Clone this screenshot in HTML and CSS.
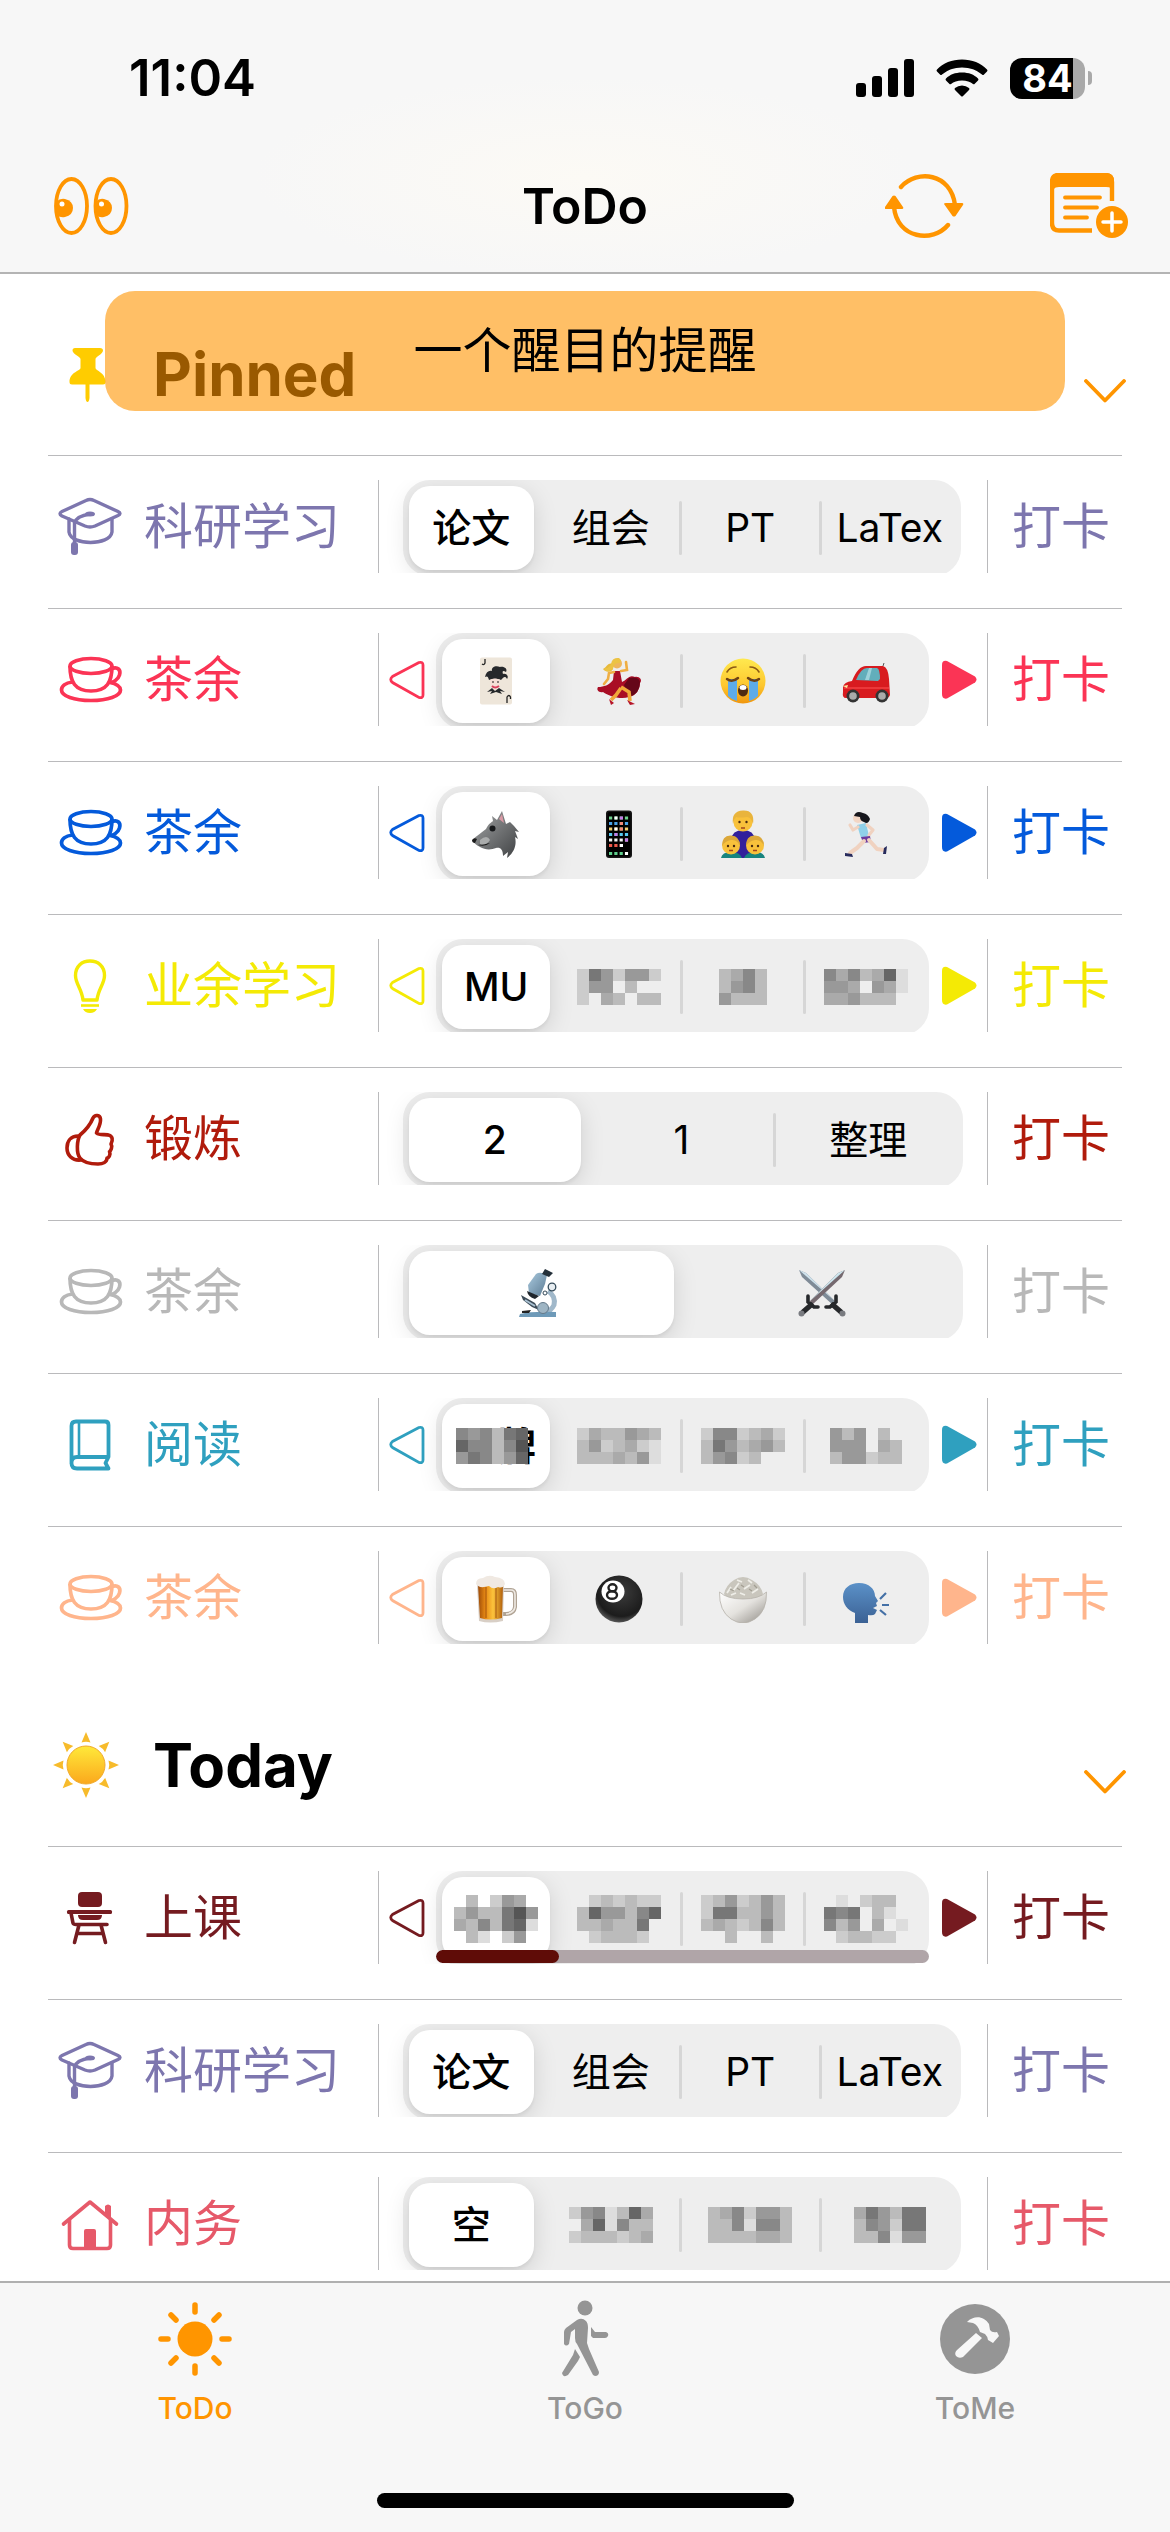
FILE: index.html
```html
<!DOCTYPE html>
<html lang="zh-CN">
<head>
<meta charset="utf-8">
<meta name="viewport" content="width=device-width, initial-scale=1">
<title>ToDo</title>
<link rel="stylesheet" href="styles.css">
</head>
<body>
<svg class="sprite" aria-hidden="true">
  <defs>
    <linearGradient id="g-face" x1="0" y1="0" x2="0" y2="1"><stop offset="0" stop-color="#ffe94f"/><stop offset=".6" stop-color="#fdc72f"/><stop offset="1" stop-color="#f0960e"/></linearGradient>
    <linearGradient id="g-sun" x1="0" y1="0" x2="0" y2="1"><stop offset="0" stop-color="#ffe93a"/><stop offset="1" stop-color="#fba81c"/></linearGradient>
    <linearGradient id="g-wolf" x1="0" y1="0" x2="1" y2="1"><stop offset="0" stop-color="#a3a5a6"/><stop offset="1" stop-color="#3e4042"/></linearGradient>
    <linearGradient id="g-beer" x1="0" y1="0" x2="1" y2="0"><stop offset="0" stop-color="#9c4a08"/><stop offset=".3" stop-color="#e88a14"/><stop offset=".6" stop-color="#fcc33c"/><stop offset="1" stop-color="#b05f0c"/></linearGradient>
    <linearGradient id="g-head" x1="0" y1="0" x2="0" y2="1"><stop offset="0" stop-color="#5b91c8"/><stop offset="1" stop-color="#3b6194"/></linearGradient>
    <linearGradient id="g-scope" x1="0" y1="0" x2="1" y2="1"><stop offset="0" stop-color="#a9c9de"/><stop offset="1" stop-color="#5c7b93"/></linearGradient>
    <linearGradient id="g-bowl" x1="0" y1="0" x2="1" y2="1"><stop offset="0" stop-color="#ffffff"/><stop offset=".5" stop-color="#e4e2de"/><stop offset="1" stop-color="#8f8b85"/></linearGradient>
    <radialGradient id="g-ball" cx=".55" cy=".35" r=".65"><stop offset="0" stop-color="#3c3c3c"/><stop offset=".8" stop-color="#1c1c1c"/><stop offset="1" stop-color="#555"/></radialGradient>
  </defs>

  <symbol id="i-cap" viewBox="0 0 66 66"><g fill="none" stroke="currentColor" stroke-width="3.400" stroke-linejoin="round" stroke-linecap="round"><path d="M29 8.500Q33 6.500 37 8.500L61 19.500Q65 21.500 61 23.500L38 34Q33 36 28 34L5 24Q1 21.500 5 19.500Z"/><path d="M12 27V40C14 54 53 54 55 40V27"/><path d="M33 22C26 23 19 26 17.500 31V51"/></g><ellipse cx="33" cy="22" rx="5" ry="2.500" fill="currentColor"/><rect x="14" y="50" width="7" height="13" rx="3" fill="currentColor"/></symbol>
  <symbol id="i-cup" viewBox="0 0 66 66"><g fill="none" stroke="currentColor" stroke-width="3.700"><ellipse cx="34" cy="21" rx="21" ry="7.500"/><path d="M13 21C13 37 18 46 34 46S55 37 55 21"/><path d="M54 24C61 21 64 25 62.500 30S56 38 51.500 37"/><path d="M15.500 37C8 38 4.500 41.500 4.500 45C4.500 51 17 55.500 34 55.500S63.500 51 63.500 45C63.500 41.500 60 39 53 37.500"/></g></symbol>
  <symbol id="i-bulb" viewBox="0 0 66 66"><g fill="none" stroke="currentColor" stroke-width="3.400"><path d="M26 49C25 38 18.500 33 18.500 24.500C18.500 15 25 10 33 10S47.500 15 47.500 24.500C47.500 33 41 38 40 49Z" stroke-linejoin="round"/><path d="M24 54.500H42" stroke-width="2.600"/></g><path d="M26 58H40Q38 62 33 62T26 58Z" fill="currentColor"/></symbol>
  <symbol id="i-thumb" viewBox="0 0 66 66"><g fill="none" stroke="currentColor" stroke-width="3.600" stroke-linejoin="round" stroke-linecap="round"><path d="M23 31C29 26 34 19 36 14C38 10 43 11 43.500 15C44 21 40 26 39.500 29C43 32 49 29.500 53 31.500C57 34 54.500 39 54 40C56 43 53.500 47 52.500 47.500C54 51 51.500 54 50 54C50 58 46 60 41 60C33 60 26 58 23 54C19 49 20 36 23 31Z"/><path d="M21 32C14 32 10 37 10 44S15 57 24 56"/></g></symbol>
  <symbol id="i-book" viewBox="0 0 66 66"><g fill="none" stroke="currentColor" stroke-width="3.800" stroke-linejoin="round"><path d="M14.500 54V16Q14.500 11.500 19 11.500H48Q51.500 11.500 51.500 15V47H20Q14.500 47 14.500 53Q14.500 58.500 20 58.500H51.500L48.500 53L51.500 47"/><path d="M22 12V47" stroke-width="2.600"/></g></symbol>
  <symbol id="i-chair" viewBox="0 0 66 66"><g fill="currentColor"><rect x="21" y="9" width="24" height="15" rx="4"/><rect x="10" y="27" width="45" height="4" rx="1.500"/><path d="M21 32H45Q45 37 40 37H26Q21 37 21 32Z"/></g><path d="M14 30L16 40Q16.500 41.500 19 41.500H50M22 42L17.500 59.500M44 42L48.500 59.500M21 50.500H46" fill="none" stroke="currentColor" stroke-width="3.600" stroke-linecap="round"/></symbol>
  <symbol id="i-house" viewBox="0 0 66 66"><g fill="none" stroke="currentColor" stroke-width="3.600" stroke-linejoin="round" stroke-linecap="round"><path d="M6.500 35L33 13L59.500 35"/><path d="M12.500 31V56Q12.500 59.500 16 59.500H50Q53.500 59.500 53.500 56V31"/></g><path d="M48 17Q51 14 54 17V30L48 25ZM27 59V42Q27 40 29 40H37Q39 40 39 42V59Z" fill="currentColor"/></symbol>
  <symbol id="i-prev" viewBox="0 0 36 40"><path d="M30 2.500L3.500 16.500Q0 19.500 3.500 22.500L30 37.500Q34 38.500 34 35V5Q34 1.500 30 2.500Z" fill="none" stroke="currentColor" stroke-width="2.800"/></symbol>
  <symbol id="i-next" viewBox="0 0 36 40"><path d="M6 1L34 16.500Q37 19.500 34 22.500L6 38.500Q1 39.500 1 34V5Q1 0 6 1Z" fill="currentColor"/></symbol>
  <symbol id="i-down" viewBox="0 0 42 24"><path d="M2 2L21 21.500L40 2" fill="none" stroke="currentColor" stroke-width="3.800" stroke-linecap="round" stroke-linejoin="round"/></symbol>

  <symbol id="e-joker" viewBox="0 0 48 48"><rect x="8" y="0.500" width="32" height="47" rx="2" fill="#eee6da"/><path d="M13 2V6Q12 8.500 10 7" fill="none" stroke="#222" stroke-width="1.300"/><path d="M35 46V40Q37 37 38.500 40V42" fill="none" stroke="#222" stroke-width="1.300"/><path d="M13 20C14 15 17 13 20 14C19 10 24 8 28 10C32 9 36 12 34 15C31 13 30 14 31 17C35 16 37 20 35 22C33 18 31 21 29 23C24 21 20 22 17 23C16 19 15 19 13 20Z" fill="#26282b"/><path d="M18 23Q23 20 28 23L27 30L23 33L19 30Z" fill="#f6dfd6"/><path d="M20 29Q23 32 27 29" stroke="#d8415d" stroke-width="2" fill="none"/><circle cx="21" cy="25" r=".8"/><circle cx="26" cy="25" r=".8"/><path d="M15 35L20 31L23 34L27 31L33 35L28 34L30 37L24 35L18 37L20 34Z" fill="#26282b"/></symbol>
  <symbol id="e-dance" viewBox="0 0 48 48"><path d="M19 14L25 14L27 25C32 23 34 17 40 20C44 19 48 23 45 26C45 32 41 39 34 40C25 43 14 39 8 35C4 36 1 33 3 30C9 30 14 28 18 23Z" fill="#a90d25"/><path d="M34 21Q44 19 45 25Q45 37 34 40L29 28Z" fill="#650719"/><path d="M18 7C13 5 12 10 8 12C11 16 17 15 18 12Z" fill="#e7b93a"/><circle cx="22" cy="6.500" r="5" fill="#eeb65c"/><path d="M16 7Q17 0 24 1Q28 4 24 6Q19 5 18 12Q10 17 9 11Q14 12 16 7Z" fill="#ecc344"/><path d="M26 14L32 13L31 5M19 15L14 16L13 22L9 27" stroke="#efae43" stroke-width="2.600" fill="none" stroke-linecap="round"/><path d="M26 30L34 35L35 44M26 31L21 38L16 43" stroke="#f0a83a" stroke-width="3.600" fill="none"/><path d="M14 42L19 46L16 48ZM32 43L40 47L35 48Z" fill="#b51428"/></symbol>
  <symbol id="e-cry" viewBox="0 0 48 48"><circle cx="24" cy="24" r="22.500" fill="url(#g-face)"/><path d="M9 22H18V44Q13 43 9 39ZM30 22H39V39Q35 43 30 44Z" fill="#5eabe9"/><path d="M8 22Q13 26 19 21M29 21Q35 26 40 22" fill="none" stroke="#6d4216" stroke-width="2.500" stroke-linecap="round"/><path d="M8 15Q11 10 17 10M40 15Q37 10 31 10" fill="none" stroke="#8d5a14" stroke-width="1.600" stroke-linecap="round"/><ellipse cx="24" cy="33.500" rx="5" ry="6" fill="#4f2b12"/><ellipse cx="24" cy="30.500" rx="3.500" ry="2.500" fill="#fff"/></symbol>
  <symbol id="e-car" viewBox="0 0 48 48"><path d="M1 30Q2 25 10 24Q16 9 24 9L41 9Q46 10 47 22L48 38Q47 41 44 41H4Q0 41 1 35Z" fill="#d81b1f"/><path d="M14 23Q19 11 25 11H35Q38 12 38 22L36 24Z" fill="#62aebb"/><path d="M27 11H30L27 23H23Z" fill="#9dd2da"/><path d="M2 31H47" stroke="#f55" stroke-width="1"/><path d="M41 9L42 6" stroke="#555"/><circle cx="11" cy="39" r="6.500" fill="#333"/><circle cx="11" cy="39" r="3.800" fill="#aaa"/><circle cx="40" cy="39" r="6.500" fill="#333"/><circle cx="40" cy="39" r="3.800" fill="#aaa"/><path d="M1 29L6 28L5 31Z" fill="#ffe9a0"/></symbol>
  <symbol id="e-wolf" viewBox="0 0 48 48"><path d="M1 30C1 28 8 24 14 19C17 13 20 12 21 11L20 6L25 10L30 1L34 14L38 12L42 16L47 22L43 21L46 29L43 27C45 35 42 43 35 48L36 42L31 46C31 39 28 37 24 38C19 40 13 40 8 37C5 35 2 34 1 30Z" fill="url(#g-wolf)"/><path d="M27 9L30 4L32 13Z" fill="#d99aa5"/><circle cx="20.500" cy="18.500" r="3" fill="#17191b"/><path d="M0 30Q2 27 5 29L3 33Q0 33 0 30ZM6 35Q13 37 18 33" fill="#1a1a1a"/><path d="M8 30Q15 24 18 30Q14 36 8 34Z" fill="#aaacac"/></symbol>
  <symbol id="e-phone" viewBox="0 0 48 48"><rect x="11" y="0.500" width="26" height="47.500" rx="3" fill="#161616"/><rect x="12.500" y="2" width="23" height="44.500" rx="2" fill="#000"/><g stroke-width="3.200" stroke-dasharray="3.200 2.100"><path d="M14 8H34" stroke="#6fd38f"/><path d="M14 13.500H34" stroke="#4aa3e8"/><path d="M14 19H34" stroke="#f2cf72"/><path d="M14 24.500H34" stroke="#57c8f0"/><path d="M14 30H34" stroke="#f3f3f3"/><path d="M14 35.500H29" stroke="#ef5a4c"/><path d="M14 43.500H34" stroke="#5fd08d"/></g><path d="M19.500 8H22.500M19.500 19H22.500M30 43.500H33M24.800 35.500H28" stroke="#fff" stroke-width="3.200"/><path d="M24.800 8H28M19.500 24.500H22.500M30 30H33" stroke="#c77be8" stroke-width="3.200"/><path d="M24.800 19H28M24.800 13.500H28" stroke="#f08a7a" stroke-width="3.200"/></symbol>
  <symbol id="e-family" viewBox="0 0 48 48"><path d="M12 30Q13 20 24 20T36 30L33 48H15Z" fill="#32209b"/><circle cx="24" cy="12" r="9.500" fill="#f8c13b"/><path d="M14 14Q12 1 24 0.500T34 14Q32 7 28 7Q20 8 17 7Q15 9 14 14Z" fill="#e9b43c"/><path d="M2 48Q3 42 12 42T23 48ZM25 48Q27 42 36 42T46 48Z" fill="#17847f"/><circle cx="12" cy="35.500" r="9" fill="#f8c13b"/><circle cx="36" cy="35.500" r="9" fill="#f8c13b"/><path d="M3 36Q3 25 12 25.500T21 36Q18 29 12 30T3 36ZM27 36Q27 25 36 25.500T45 36Q42 29 36 30T27 36Z" fill="#dca839"/><g fill="#4a2b10"><circle cx="20.500" cy="12" r="1.200"/><circle cx="27.500" cy="12" r="1.200"/><circle cx="9" cy="36" r="1.200"/><circle cx="15" cy="36" r="1.200"/><circle cx="33" cy="36" r="1.200"/><circle cx="39" cy="36" r="1.200"/></g><path d="M22 18H26M10 40.500H14M34 40.500H38" stroke="#a1461d" stroke-width="1.500"/></symbol>
  <symbol id="e-run" viewBox="0 0 48 48"><circle cx="16" cy="8" r="5" fill="#f3d6c4"/><path d="M12 6Q14 0 21 3Q26 4 28 9Q26 15 22 12Q18 11 18 7Z" fill="#16171d"/><path d="M15 15L24 13L27 26L19 28Z" fill="#8fd0e9"/><path d="M16 17L11 20L8 15M25 15L31 20L27 25" fill="none" stroke="#f0d2c0" stroke-width="3.200" stroke-linecap="round" stroke-linejoin="round"/><path d="M19 27L28 26L29 32L21 33Z" fill="#6d3b9f"/><path d="M22 31L15 38L8 43M27 30L35 39L42 40" fill="none" stroke="#f0d2c0" stroke-width="4" stroke-linecap="round" stroke-linejoin="round"/><path d="M3 43L10 44L11 47L3 46ZM42 38L45 36L44 44L41 44Z" fill="#272b5c"/></symbol>
  <symbol id="e-scope" viewBox="0 0 48 48"><path d="M30 22Q38 27 36 36Q33 42 28 43" fill="none" stroke="#a0b8ca" stroke-width="5"/><path d="M18 5Q22 2 29 6L27 15L22 27L11 24L10 16Z" fill="url(#g-scope)"/><path d="M24 5L27 0L35 4L31 8Z" fill="#24303a"/><path d="M9 22L21 27L17 30Q10 28 9 22Z" fill="#20262c"/><circle cx="34" cy="18" r="3.800" fill="#e8eef2" stroke="#344a59" stroke-width="1.300"/><circle cx="27" cy="24" r="2" fill="#fff" stroke="#344a59"/><path d="M3 26L17 34L21 41L14 38L5 31Z" fill="#3c4b57"/><path d="M7 31L17 37" stroke="#a9c1d2" stroke-width="2"/><path d="M2 45Q14 42 38 43V48H1Z" fill="#6e9ab8"/><circle cx="25" cy="39" r="5.500" fill="#9eb5c4" stroke="#63798a"/><path d="M4 42L13 41L11 44H4Z" fill="#222"/></symbol>
  <symbol id="e-swords" viewBox="0 0 48 48"><path d="M1 1L8 4L38 33L35 36L4 8Z" fill="#7f8b97"/><path d="M1 1L8 4L38 33Z" fill="#cfe2ec"/><path d="M47 1L40 4L11 33L14 36L44 8Z" fill="#75696f"/><path d="M47 1L40 4L11 33Z" fill="#cde6ee"/><g stroke="#26282b" fill="none" stroke-linecap="round"><path d="M10 27L10 33L16 38L20 38M38 27V33L32 38L28 38" stroke-width="3.600"/><path d="M13 36L5 43M35 36L43 43" stroke-width="5"/></g><circle cx="3.500" cy="44.500" r="3" fill="#797b80"/><circle cx="44.500" cy="44.500" r="3" fill="#797b80"/></symbol>
  <symbol id="e-beer" viewBox="0 0 48 48"><path d="M29 15H39Q43 15 43 20V32Q42 39 34 39H30" fill="none" stroke="#b0a394" stroke-width="4"/><path d="M30 15H39Q43 15 43 20V32Q42 38 34 39" fill="none" stroke="#eee9e3" stroke-width="1.600"/><path d="M5 9H32L31 46Q18 49 7 46Z" fill="#d8cfc6"/><path d="M6 10H31L30 43Q18 46 8 43Z" fill="url(#g-beer)"/><path d="M14 12V43M24 12V43" stroke="#9b4c0a" stroke-opacity=".45" stroke-width="2"/><path d="M4 9Q4 3 11 3Q17 -1 23 2Q33 3 33 9Q31 14 26 12Q21 15 17 11Q7 14 4 9Z" fill="#f0e9e2"/></symbol>
  <symbol id="e-ball" viewBox="0 0 48 48"><circle cx="24" cy="24" r="23.500" fill="url(#g-ball)"/><ellipse cx="18" cy="16.500" rx="11.500" ry="11" fill="#fff"/><g fill="none" stroke="#222" stroke-width="2.400"><ellipse cx="17.500" cy="12.800" rx="4" ry="3.500"/><ellipse cx="17" cy="20" rx="5" ry="3.800"/></g></symbol>
  <symbol id="e-rice" viewBox="0 0 48 48"><path d="M5 19Q7 10 15 5Q24 -1 33 5Q42 10 44 19L40 24H9Z" fill="#c9c6bd"/><path d="M8 18L12 12M14 16L20 8M18 5L23 7M25 14L31 10M33 18L39 14M29 5L33 8M21 18L26 20M12 20L17 18" stroke="#efeee8" stroke-width="1.800"/><path d="M11 14L15 16M22 10L25 12M30 14L33 16M35 10L38 13M18 13L21 15" stroke="#a29e92" stroke-width="1.200"/><path d="M0.500 17Q8 24 24 24T47.500 17Q48 36 36 44Q30 48 24 48T12 44Q0 36 0.500 17Z" fill="url(#g-bowl)" stroke="#b5b1aa" stroke-width=".8"/></symbol>
  <symbol id="e-speak" viewBox="0 0 48 48"><path d="M13 48V38C5 35 1 29 1 22C1 13 8 8 17 8C27 8 33 14 33 21L36 26L34 28L35 31L31 33L35 35L33 39Q31 41 26 40V48Z" fill="url(#g-head)"/><path d="M38 24L44 18M40 30H47M38 35L44 40" stroke="#4470a6" stroke-width="2.200"/></symbol>
</svg>

<div class="app">
  <header class="top">
    <div class="status">
      <span class="time">11:04</span>
      <div class="status-icons">
        <svg width="58" height="38" viewBox="0 0 58 38" role="img" aria-label="信号"><rect y="24" width="10" height="14" rx="3"/><rect x="16" y="17" width="10" height="21" rx="3"/><rect x="32" y="9" width="10" height="29" rx="3"/><rect x="48" width="10" height="38" rx="3"/></svg>
        <svg width="52" height="38" viewBox="0 0 52 38" role="img" aria-label="Wi-Fi"><path d="M26 .5C36 .5 45 4 51 10.500Q52 11.500 51 12.500L48 15.500Q47 16.500 46 15.500Q38 8.500 26 8.500T6 15.500Q5 16.500 4 15.500L1 12.500Q0 11.500 1 10.500C7 4 16 .5 26 .5ZM26 13.500C33 13.500 38 15.500 42 19.500Q43 20.500 42 21.500L38.500 25Q38 25.500 37 25Q33 21.500 26 21.500T15 25Q14 25.500 13.500 25L10 21.500Q9 20.500 10 19.500C14 15.500 19 13.500 26 13.500ZM26 26.500Q30 26.500 33 29Q34 30 33 31L27 37Q26 38 25 37L19 31Q18 30 19 29Q22 26.500 26 26.500Z"/></svg>
        <div class="battery"><span class="battery-cell">84</span><span class="battery-nub"></span></div>
      </div>
    </div>
    <div class="nav">
      <button class="icon-btn watch" type="button" aria-label="查看">
        <svg width="76" height="60" viewBox="0 0 76 60"><g fill="none" stroke="currentColor" stroke-width="3.800"><ellipse cx="18.500" cy="30" rx="15.500" ry="27"/><ellipse cx="58" cy="30" rx="15.500" ry="27"/></g><g fill="currentColor"><path d="M3 26Q7 22 12 23Q20 25 20 32T12 41Q7 42 4 39Z"/><path d="M42.500 26Q46 22 51 23Q59 25 59 32T51 41Q46 42 43.500 39Z"/></g><circle cx="9" cy="28" r="2.500" fill="#fff"/><circle cx="48.500" cy="28" r="2.500" fill="#fff"/></svg>
      </button>
      <h1>ToDo</h1>
      <div class="nav-right">
        <button class="icon-btn" type="button" aria-label="刷新">
          <svg width="80" height="66" viewBox="0 0 80 66"><g fill="none" stroke="currentColor" stroke-width="4.400" stroke-linecap="round"><path d="M16 14C32 -4 66 0 70 32"/><path d="M63 52C48 70 12 66 9 34"/></g><path d="M59 31Q59 30 61 30H77Q79 30 78 32L70.500 43Q69 44 67.500 43ZM0 34Q-1 36 1 36H17Q19 36 18 34L10.500 23Q9 22 7.500 23Z" fill="currentColor"/></svg>
        </button>
        <button class="icon-btn" type="button" aria-label="新建">
          <svg width="78" height="66" viewBox="0 0 78 66"><path d="M42 57.500H9Q2 57.500 2 50V9Q2 2 9 2H55Q62 2 62 9V28" fill="none" stroke="currentColor" stroke-width="4.400"/><path d="M1 16V8Q1 0 9 0H56Q64 0 64 8V17L60 15Q60 14 56 14H9Q5 14 4 16Z" fill="currentColor"/><path d="M15 24.500H50M15 34.500H47M15 44.500H37" stroke="currentColor" stroke-width="3.800" stroke-linecap="round"/><circle cx="62" cy="49" r="16" fill="currentColor"/><path d="M62 40V58M53 49H71" stroke="#fff" stroke-width="3.500" stroke-linecap="round"/></svg>
        </button>
      </div>
    </div>
  </header>

  <div class="stage">
    <div class="banner" role="status">一个醒目的提醒</div>
    <main>
      <section>
        <div class="section-head">
          <svg width="66" height="66" viewBox="0 0 66 66" class="pin" aria-hidden="true"><path d="M22 7H47Q50 7 50 9.500C50 13 42.500 16 42.500 18V27C42.500 30 52.500 31 52.500 41Q52.500 43.500 50 43.500H19Q16.500 43.500 16.500 41C16.500 31 27.500 30 27.500 27V18C27.500 16 19.500 13 19.500 9.500Q19.500 7 22 7ZM32.500 43H36.500V57Q36 61 34.500 61T32.500 57Z" fill="currentColor"/></svg>
          <h2>Pinned</h2>
          <button class="icon-btn fold" type="button" aria-label="折叠 Pinned"><svg width="42" height="24"><use href="#i-down"/></svg></button>
        </div>

        <div class="row purple">
          <div class="label"><svg width="66" height="66"><use href="#i-cap"/></svg><span>科研学习</span></div>
          <div class="picker wide">
            <div class="segments" role="radiogroup" aria-label="科研学习">
              <label><input type="radio" name="r1" checked><span>论文</span></label>
              <label><input type="radio" name="r1"><span>组会</span></label>
              <label><input type="radio" name="r1"><span>PT</span></label>
              <label><input type="radio" name="r1"><span>LaTex</span></label>
            </div>
          </div>
          <button class="punch" type="button">打卡</button>
        </div>

        <div class="row red">
          <div class="label"><svg width="66" height="66"><use href="#i-cup"/></svg><span>茶余</span></div>
          <div class="picker">
            <button class="icon-btn" type="button" aria-label="上一页"><svg width="36" height="40"><use href="#i-prev"/></svg></button>
            <div class="segments" role="radiogroup" aria-label="茶余">
              <label><input type="radio" name="r2" aria-label="纸牌" checked><span><svg width="48" height="48"><use href="#e-joker"/></svg></span></label>
              <label><input type="radio" name="r2" aria-label="跳舞"><span><svg width="48" height="48"><use href="#e-dance"/></svg></span></label>
              <label><input type="radio" name="r2" aria-label="大哭"><span><svg width="48" height="48"><use href="#e-cry"/></svg></span></label>
              <label><input type="radio" name="r2" aria-label="汽车"><span><svg width="48" height="48"><use href="#e-car"/></svg></span></label>
            </div>
            <button class="icon-btn" type="button" aria-label="下一页"><svg width="36" height="40"><use href="#i-next"/></svg></button>
          </div>
          <button class="punch" type="button">打卡</button>
        </div>

        <div class="row blue">
          <div class="label"><svg width="66" height="66"><use href="#i-cup"/></svg><span>茶余</span></div>
          <div class="picker">
            <button class="icon-btn" type="button" aria-label="上一页"><svg width="36" height="40"><use href="#i-prev"/></svg></button>
            <div class="segments" role="radiogroup" aria-label="茶余">
              <label><input type="radio" name="r3" aria-label="狼" checked><span><svg width="48" height="48"><use href="#e-wolf"/></svg></span></label>
              <label><input type="radio" name="r3" aria-label="手机"><span><svg width="48" height="48"><use href="#e-phone"/></svg></span></label>
              <label><input type="radio" name="r3" aria-label="家庭"><span><svg width="48" height="48"><use href="#e-family"/></svg></span></label>
              <label><input type="radio" name="r3" aria-label="跑步"><span><svg width="48" height="48"><use href="#e-run"/></svg></span></label>
            </div>
            <button class="icon-btn" type="button" aria-label="下一页"><svg width="36" height="40"><use href="#i-next"/></svg></button>
          </div>
          <button class="punch" type="button">打卡</button>
        </div>

        <div class="row yellow">
          <div class="label"><svg width="66" height="66"><use href="#i-bulb"/></svg><span>业余学习</span></div>
          <div class="picker">
            <button class="icon-btn" type="button" aria-label="上一页"><svg width="36" height="40"><use href="#i-prev"/></svg></button>
            <div class="segments" role="radiogroup" aria-label="业余学习">
              <label><input type="radio" name="r4" checked><span>MU</span></label>
              <label><input type="radio" name="r4" aria-label="已隐藏"><span data-mosaic="c79c99c c99.b.. ceabebb"></span></label>
              <label><input type="radio" name="r4" aria-label="已隐藏"><span data-mosaic="ba8b b98b 9bbb"></span></label>
              <label><input type="radio" name="r4" aria-label="已隐藏"><span data-mosaic="8a8ba6d 99a.9ad aa9bbb."></span></label>
            </div>
            <button class="icon-btn" type="button" aria-label="下一页"><svg width="36" height="40"><use href="#i-next"/></svg></button>
          </div>
          <button class="punch" type="button">打卡</button>
        </div>

        <div class="row crimson">
          <div class="label"><svg width="66" height="66"><use href="#i-thumb"/></svg><span>锻炼</span></div>
          <div class="picker wide few">
            <div class="segments" role="radiogroup" aria-label="锻炼">
              <label><input type="radio" name="r5" checked><span>2</span></label>
              <label><input type="radio" name="r5"><span>1</span></label>
              <label><input type="radio" name="r5"><span>整理</span></label>
            </div>
          </div>
          <button class="punch" type="button">打卡</button>
        </div>

        <div class="row gray">
          <div class="label"><svg width="66" height="66"><use href="#i-cup"/></svg><span>茶余</span></div>
          <div class="picker wide few">
            <div class="segments" role="radiogroup" aria-label="茶余">
              <label><input type="radio" name="r6" aria-label="显微镜" checked><span><svg width="48" height="48"><use href="#e-scope"/></svg></span></label>
              <label><input type="radio" name="r6" aria-label="双剑"><span><svg width="48" height="48"><use href="#e-swords"/></svg></span></label>
            </div>
          </div>
          <button class="punch" type="button">打卡</button>
        </div>

        <div class="row teal">
          <div class="label"><svg width="66" height="66"><use href="#i-book"/></svg><span>阅读</span></div>
          <div class="picker">
            <button class="icon-btn" type="button" aria-label="上一页"><svg width="36" height="40"><use href="#i-prev"/></svg></button>
            <div class="segments" role="radiogroup" aria-label="阅读">
              <label><input type="radio" name="r7" aria-label="已隐藏" checked><span data-mosaic="898b76 688b85 978b96"><b class="peek">牌</b></span></label>
              <label><input type="radio" name="r7" aria-label="已隐藏"><span data-mosaic="cabb9ab b9cbacd bbbab9d"></span></label>
              <label><input type="radio" name="r7" aria-label="已隐藏"><span data-mosaic="c88cbac b79ba9b b98cb.."></span></label>
              <label><input type="radio" name="r7" aria-label="已隐藏"><span data-mosaic="9b9.b. 999.ab b99cbb"></span></label>
            </div>
            <button class="icon-btn" type="button" aria-label="下一页"><svg width="36" height="40"><use href="#i-next"/></svg></button>
          </div>
          <button class="punch" type="button">打卡</button>
        </div>

        <div class="row peach">
          <div class="label"><svg width="66" height="66"><use href="#i-cup"/></svg><span>茶余</span></div>
          <div class="picker">
            <button class="icon-btn" type="button" aria-label="上一页"><svg width="36" height="40"><use href="#i-prev"/></svg></button>
            <div class="segments" role="radiogroup" aria-label="茶余">
              <label><input type="radio" name="r8" aria-label="啤酒" checked><span><svg width="48" height="48"><use href="#e-beer"/></svg></span></label>
              <label><input type="radio" name="r8" aria-label="台球"><span><svg width="48" height="48"><use href="#e-ball"/></svg></span></label>
              <label><input type="radio" name="r8" aria-label="米饭"><span><svg width="48" height="48"><use href="#e-rice"/></svg></span></label>
              <label><input type="radio" name="r8" aria-label="聊天"><span><svg width="48" height="48"><use href="#e-speak"/></svg></span></label>
            </div>
            <button class="icon-btn" type="button" aria-label="下一页"><svg width="36" height="40"><use href="#i-next"/></svg></button>
          </div>
          <button class="punch" type="button">打卡</button>
        </div>
      </section>

      <section>
        <div class="section-head">
          <svg width="66" height="66" viewBox="0 0 66 66" aria-hidden="true"><g fill="#f7bb2b"><path id="ray" d="M33 0L37.500 10.500Q33 9 28.500 10.500Z"/><use href="#ray" transform="rotate(45 33 33)"/><use href="#ray" transform="rotate(90 33 33)"/><use href="#ray" transform="rotate(135 33 33)"/><use href="#ray" transform="rotate(180 33 33)"/><use href="#ray" transform="rotate(225 33 33)"/><use href="#ray" transform="rotate(270 33 33)"/><use href="#ray" transform="rotate(315 33 33)"/></g><circle cx="33" cy="33" r="19" fill="url(#g-sun)" stroke="#f0a92a" stroke-width="1"/></svg>
          <h2>Today</h2>
          <button class="icon-btn fold" type="button" aria-label="折叠 Today"><svg width="42" height="24"><use href="#i-down"/></svg></button>
        </div>

        <div class="row maroon">
          <div class="label"><svg width="66" height="66"><use href="#i-chair"/></svg><span>上课</span></div>
          <div class="picker">
            <button class="icon-btn" type="button" aria-label="上一页"><svg width="36" height="40"><use href="#i-prev"/></svg></button>
            <div class="segments" role="radiogroup" aria-label="上课">
              <label><input type="radio" name="r9" aria-label="已隐藏" checked><span data-mosaic=".b.c9a. b9bb759 ab8b76d .bd.c9."></span></label>
              <label><input type="radio" name="r9" aria-label="已隐藏"><span data-mosaic=".cbcbcc b699b86 bbabb7. .cbbbc."></span></label>
              <label><input type="radio" name="r9" aria-label="已隐藏"><span data-mosaic="cb9cb9b c77bb9b babcb8b ..b..b."></span></label>
              <label><input type="radio" name="r9" aria-label="已隐藏"><span data-mosaic=".decbbe 787ebd. 8b9.a.d .cbbcc."></span></label>
              <progress value="25" max="100" aria-label="上课进度"></progress>
            </div>
            <button class="icon-btn" type="button" aria-label="下一页"><svg width="36" height="40"><use href="#i-next"/></svg></button>
          </div>
          <button class="punch" type="button">打卡</button>
        </div>

        <div class="row purple">
          <div class="label"><svg width="66" height="66"><use href="#i-cap"/></svg><span>科研学习</span></div>
          <div class="picker wide">
            <div class="segments" role="radiogroup" aria-label="科研学习">
              <label><input type="radio" name="r10" checked><span>论文</span></label>
              <label><input type="radio" name="r10"><span>组会</span></label>
              <label><input type="radio" name="r10"><span>PT</span></label>
              <label><input type="radio" name="r10"><span>LaTex</span></label>
            </div>
          </div>
          <button class="punch" type="button">打卡</button>
        </div>

        <div class="row rose">
          <div class="label"><svg width="66" height="66"><use href="#i-house"/></svg><span>内务</span></div>
          <div class="picker wide">
            <div class="segments" role="radiogroup" aria-label="内务">
              <label><input type="radio" name="r11" checked><span>空</span></label>
              <label><input type="radio" name="r11" aria-label="已隐藏"><span data-mosaic="c98db6a ea6d8bb cbbbcba"></span></label>
              <label><input type="radio" name="r11" aria-label="已隐藏"><span data-mosaic="ba8c99b bb8d88b bbbbaab"></span></label>
              <label><input type="radio" name="r11" aria-label="已隐藏"><span data-mosaic="a79b77 b89c77 bb8d99"></span></label>
            </div>
          </div>
          <button class="punch" type="button">打卡</button>
        </div>
      </section>
    </main>
  </div>

  <footer>
    <nav class="tabs" aria-label="主导航">
      <a class="active" href="#todo" aria-current="page">
        <svg width="78" height="78" viewBox="0 0 78 78"><circle cx="39" cy="39" r="17.500" fill="currentColor"/><path d="M39 5V12M39 66V73M5 39H12M66 39H73M15 15L20 20M58 58L63 63M63 15L58 20M20 58L15 63" stroke="currentColor" stroke-width="5.500" stroke-linecap="round"/></svg>
        <span>ToDo</span>
      </a>
      <a href="#togo">
        <svg width="78" height="78" viewBox="0 0 78 78"><circle cx="39" cy="8" r="7.500" fill="currentColor"/><path d="M31 20Q36 17 40 21Q42 23 42 28L41 43L43 49L53 72Q53 76 49 76L47 75L31 44Q29 42 29 38V29L25 32L23 44Q20 47 18 44V32Q18 30 20 28ZM29 49L34 57L32 61L22 75Q17 78 16 73L27 55ZM45 27L49 32L60 32Q63 33 62 36Q61 38 59 38H47L45 36Z" fill="currentColor"/></svg>
        <span>ToGo</span>
      </a>
      <a href="#tome">
        <svg width="78" height="78" viewBox="0 0 78 78"><circle cx="39" cy="39" r="35" fill="currentColor"/><path d="M31 22C38 15 48 16 53 24L54 30Q56 33 61 32L63 36L57 43L52 40Q52 37 49 34L44 32Q42 25 37 23ZM40 33L46 38L27 57Q23 59 20 56Q18 53 21 50Z" fill="#f7f7f7"/></svg>
        <span>ToMe</span>
      </a>
    </nav>
    <div class="home-bar"></div>
  </footer>
</div>
<script src="mosaic.js"></script>
</body>
</html>
```
FILE: styles.css
```css
* { box-sizing: border-box; }

body {
  margin: 0;
  background: #fff;
  color: #000;
  font-family: "Inter", "Noto Sans CJK SC", sans-serif;
}

h1, h2 { margin: 0; }

svg { display: block; flex: none; }

.sprite { position: absolute; width: 0; height: 0; }

button {
  padding: 0;
  border: 0;
  background: none;
  color: inherit;
  font: inherit;
}

.icon-btn { display: block; flex: none; }

.app {
  display: flex;
  flex-direction: column;
  height: 100vh;
}

/* top bar */

.top {
  background: radial-gradient(ellipse at 50% 65%, #fcfaf5, #f7f7f7 40%);
  border-bottom: 2px solid #b4b4b4;
}

.status {
  display: flex;
  align-items: center;
  justify-content: space-between;
  padding: 45px 78px 29px 129px;
}

.time {
  font-size: 51px;
  font-weight: 600;
  line-height: 66px;
}

.status-icons {
  display: flex;
  align-items: center;
  gap: 22px;
}

.battery {
  display: flex;
  align-items: center;
  gap: 3px;
}

.battery-cell {
  width: 75px;
  height: 41px;
  border-radius: 12px;
  background: linear-gradient(90deg, #000 84%, #a9a9a9 84%);
  color: #fff;
  font-size: 38px;
  font-weight: 700;
  line-height: 41px;
  text-align: center;
}

.battery-nub {
  width: 4px;
  height: 14px;
  border-radius: 0 6px 6px 0;
  background: #a9a9a9;
}

.nav {
  display: grid;
  grid-template-columns: 1fr auto 1fr;
  align-items: center;
  height: 132px;
  padding: 0 42px;
  color: #ff9500;
}

.nav .watch { margin-left: 11px; justify-self: start; }

.nav h1 {
  color: #000;
  font-size: 50px;
  font-weight: 600;
  line-height: 60px;
}

.nav-right {
  display: flex;
  justify-content: flex-end;
  gap: 85px;
}

/* lists */

.stage {
  position: relative;
  flex: 1;
  min-height: 0;
}

main {
  height: 100%;
  padding-top: 14px;
  overflow-y: auto;
  scrollbar-width: none;
}

.banner {
  position: absolute;
  z-index: 2;
  top: 17px;
  left: 9%;
  right: 9%;
  border-radius: 30px;
  background: rgba(255, 149, 0, .6);
  font-size: 49px;
  line-height: 120px;
  text-align: center;
}

.section-head {
  display: flex;
  align-items: center;
  gap: 34px;
  padding: 50px 44px 45px 53px;
}

.section-head h2 {
  flex: 1;
  font-size: 60px;
  font-weight: 700;
  line-height: 72px;
}

.pin { color: #ffcc00; }

.fold {
  align-self: flex-end;
  padding-bottom: 7px;
  color: #ff9500;
}

.row {
  display: grid;
  grid-template-columns: 331px 1fr 135px;
  margin: 0 48px;
  padding: 24px 0 35px;
  border-top: 1px solid #bababc;
}

.label {
  display: flex;
  align-items: center;
  gap: 21px;
  padding-left: 9px;
  border-right: 1px solid #bababc;
  font-size: 49px;
  line-height: 60px;
}

.label svg { margin-bottom: 4px; }

.punch {
  padding-left: 12px;
  border-left: 1px solid #bababc;
  font-size: 49px;
  line-height: 60px;
}

.picker {
  display: flex;
  align-items: flex-start;
  justify-content: space-between;
  height: 93px;
  padding: 0 10px;
  overflow: hidden;
}

.picker.wide { padding: 0 26px 0 24px; }

.picker.few { padding: 0 24px; }

.picker .icon-btn { padding-top: 27px; }

.segments {
  position: relative;
  display: flex;
  flex: 1;
  height: 96px;
  margin: 0 12px 0 11px;
  border-radius: 27px;
  background: #eee;
  color: #000;
  font-size: 39px;
  line-height: 48px;
}

.wide .segments { margin: 0; }

.segments label {
  position: relative;
  display: flex;
  flex: 1;
  padding: 6px 9px 6px 6px;
}

.segments input {
  position: absolute;
  inset: 0;
  margin: 0;
  appearance: none;
}

.segments label > span {
  position: relative;
  display: flex;
  flex: 1;
  align-items: center;
  justify-content: center;
  border-radius: 21px;
}

.segments input:checked + span {
  background: #fff;
  box-shadow: 0 3px 3px rgba(0, 0, 0, .05), 0 6px 24px rgba(0, 0, 0, .13);
  font-weight: 500;
}

/* hairline between two unselected segments */
.segments label:nth-child(n+2):not(:nth-last-child(1 of label))::after {
  content: "";
  position: absolute;
  top: 21px;
  right: 0;
  width: 3px;
  height: 54px;
  border-radius: 2px;
  background: #d6d6d6;
}

.mosaic { position: relative; z-index: 1; }

.peek { margin-left: -31px; order: 1; font-weight: 700; }

.segments progress {
  position: absolute;
  top: 79px;
  left: 0;
  width: 100%;
  height: 13px;
  border: 0;
  border-radius: 7px;
  background: #b0a5a8;
  overflow: hidden;
  appearance: none;
}

.segments progress::-webkit-progress-bar { background: #b0a5a8; }

.segments progress::-webkit-progress-value {
  border-radius: 7px;
  background: #5f0c07;
}

.purple { color: #7d76ae; }
.red { color: #fb3455; }
.blue { color: #045adb; }
.yellow { color: #f4ea05; }
.crimson { color: #b01b0c; }
.gray { color: #b8b8b8; }
.teal { color: #2fa0bf; }
.peach { color: #ffb58c; }
.maroon { color: #751b20; }
.rose { color: #e65969; }

/* bottom bar */

footer {
  border-top: 2px solid #b0b0b0;
  padding: 17px 0 24px;
  background: #f7f7f7;
}

.tabs {
  display: grid;
  grid-template-columns: repeat(3, 1fr);
}

.tabs a {
  display: flex;
  flex-direction: column;
  align-items: center;
  gap: 12px;
  color: #959595;
  font-size: 30px;
  font-weight: 500;
  line-height: 36px;
  text-decoration: none;
}

.tabs .active { color: #ff9500; }

.home-bar {
  width: 417px;
  height: 15px;
  margin: 67px auto 0;
  border-radius: 8px;
  background: #000;
}
```
FILE: mosaic.js
```js
// Hidden option names are drawn as a grid of gray cells.
// Each word of data-mosaic is one line of cells, each hex digit one gray level.
const CELL = 12;
const NS = "http://www.w3.org/2000/svg";

document.querySelectorAll("[data-mosaic]").forEach((slot) => {
  const lines = slot.dataset.mosaic.split(" ");
  const svg = document.createElementNS(NS, "svg");
  svg.setAttribute("class", "mosaic");
  svg.setAttribute("width", lines[0].length * CELL);
  svg.setAttribute("height", lines.length * CELL);
  lines.forEach((line, y) => {
    [...line].forEach((level, x) => {
      if (level === ".") return;
      const cell = document.createElementNS(NS, "rect");
      cell.setAttribute("x", x * CELL);
      cell.setAttribute("y", y * CELL);
      cell.setAttribute("width", CELL);
      cell.setAttribute("height", CELL);
      cell.setAttribute("fill", "#" + level.repeat(3));
      svg.append(cell);
    });
  });
  slot.prepend(svg);
});
```
